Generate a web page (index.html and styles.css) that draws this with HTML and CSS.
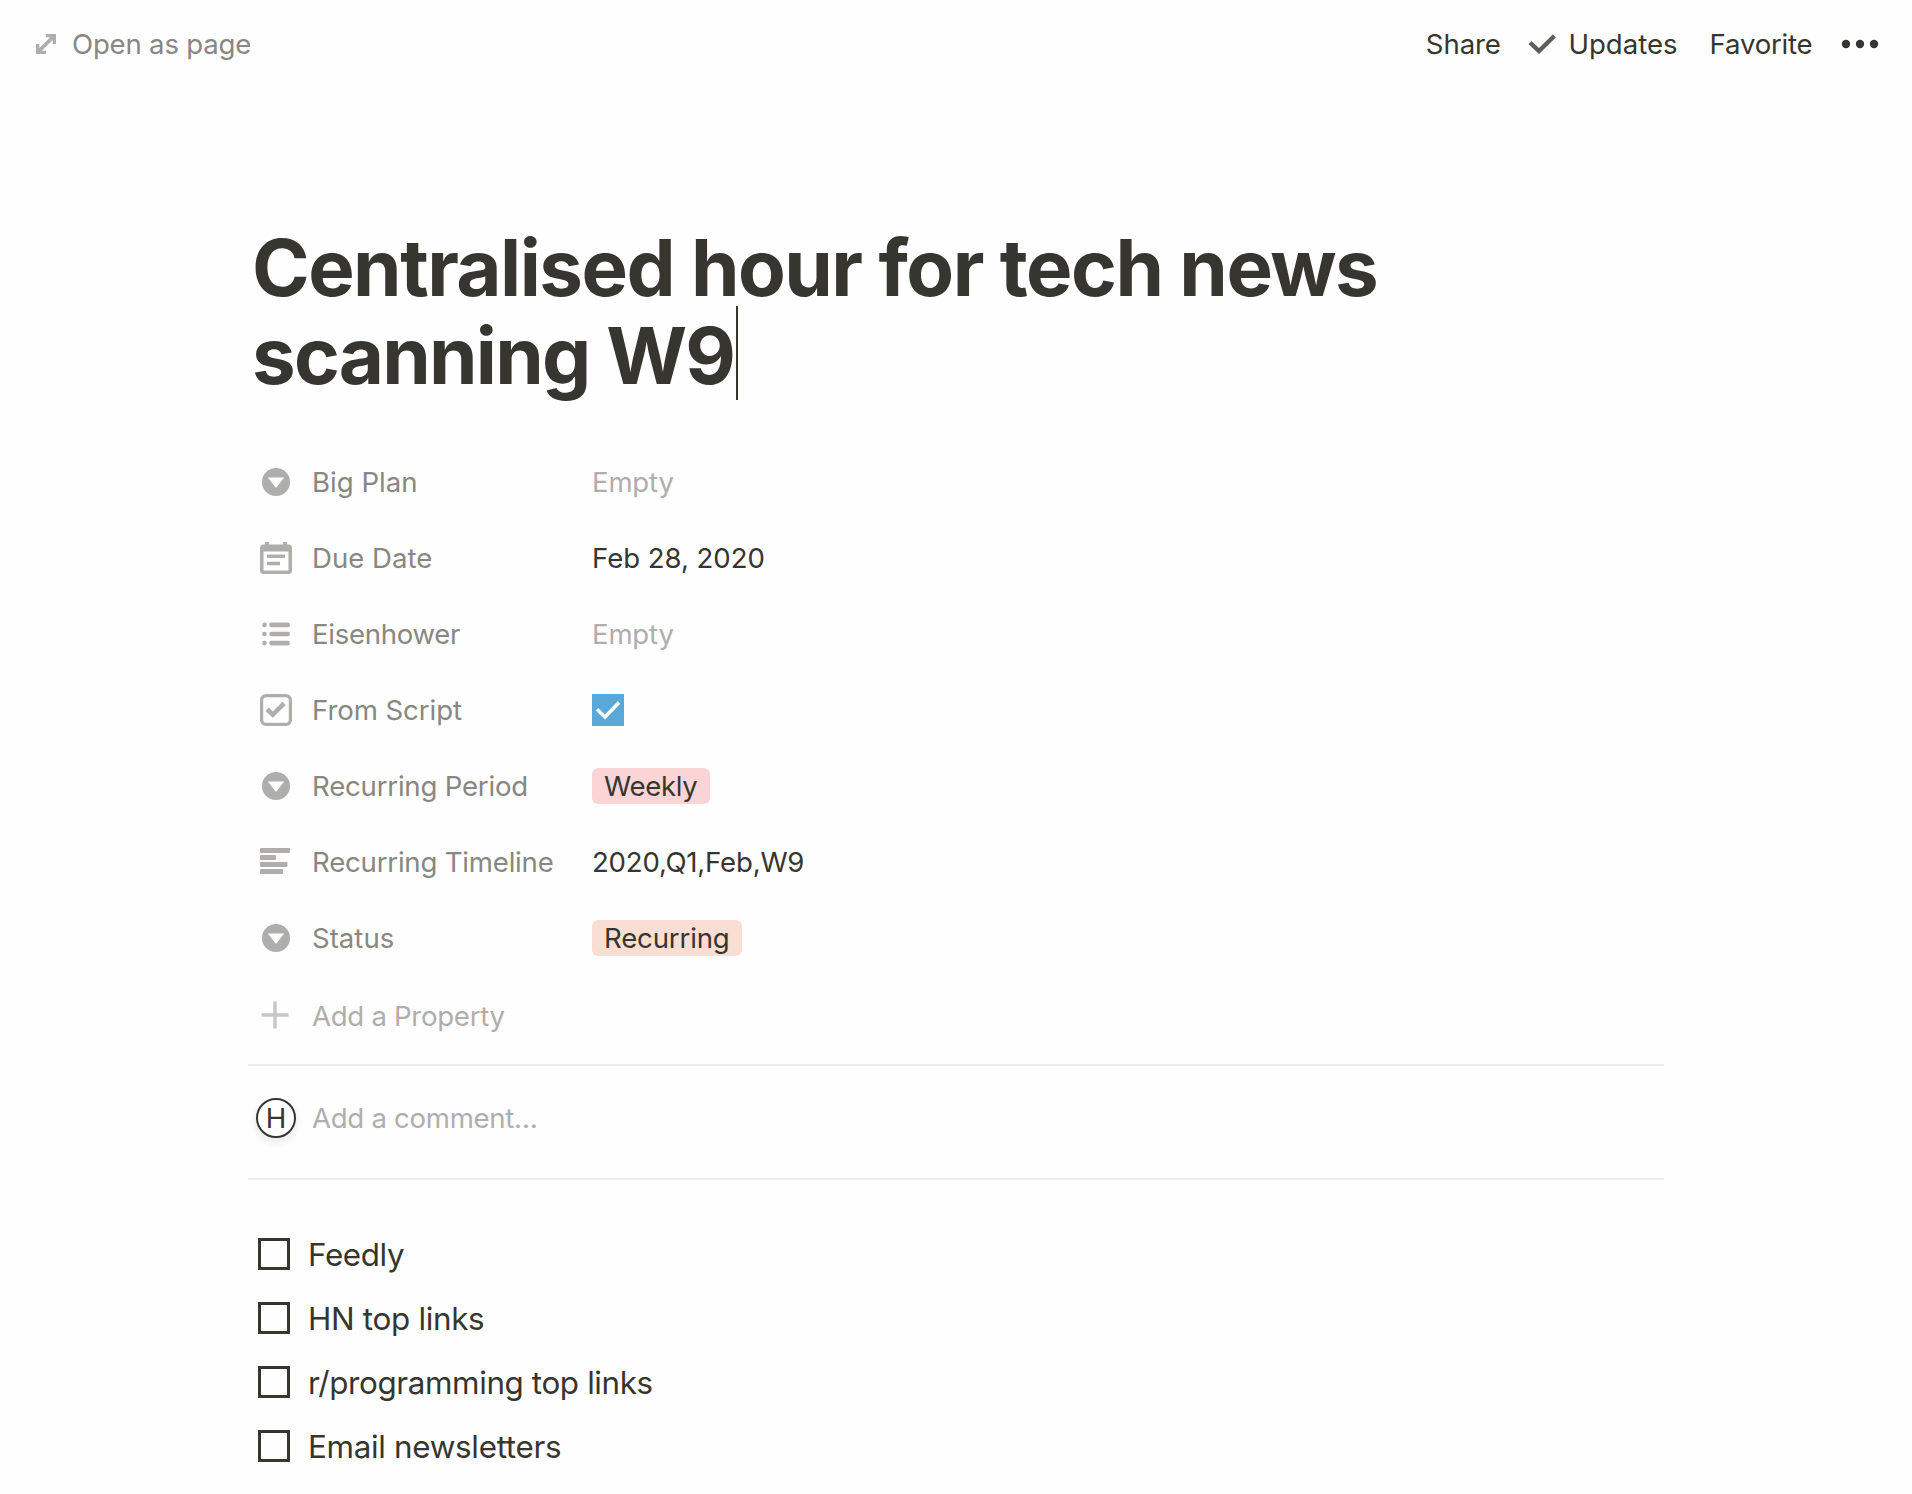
FILE: index.html
```html
<!DOCTYPE html>
<html lang="en">
<head>
<meta charset="utf-8">
<title>Centralised hour for tech news scanning W9</title>
<link rel="stylesheet" href="styles.css">
</head>
<body>
<svg class="sprite" aria-hidden="true">
  <symbol id="select" viewBox="0 0 32 32"><path fill-rule="evenodd" d="M16 2a14 14 0 1 1 0 28a14 14 0 0 1 0-28zM7.800 11.400L16 22l8.200-10.600z"/></symbol>
  <symbol id="date" viewBox="0 0 32 32"><path fill-rule="evenodd" d="M5 0h4v2.500h14V0h4v2.500h1.500A3.500 3.500 0 0 1 32 6v22.500a3.500 3.500 0 0 1-3.500 3.500h-25A3.500 3.500 0 0 1 0 28.500V6a3.500 3.500 0 0 1 3.500-3.500H5zM3.500 9.500v19h25v-19z"/><path d="M7 12.500h18V16H7zM7 19.700h13v3.500H7z"/></symbol>
  <symbol id="list" viewBox="0 0 32 32"><circle cx="4.500" cy="6.900" r="2.300"/><circle cx="4.500" cy="16" r="2.300"/><circle cx="4.500" cy="25.100" r="2.300"/><rect x="9.200" y="4.600" width="20.800" height="4.600" rx="2.300"/><rect x="9.200" y="13.700" width="20.800" height="4.600" rx="2.300"/><rect x="9.200" y="22.800" width="20.800" height="4.600" rx="2.300"/></symbol>
  <symbol id="checkbox" viewBox="0 0 32 32"><path fill-rule="evenodd" d="M6 0h20a6 6 0 0 1 6 6v20a6 6 0 0 1-6 6H6a6 6 0 0 1-6-6V6a6 6 0 0 1 6-6zM6.500 3.200a3 3 0 0 0-3.300 3.300v19a3 3 0 0 0 3.300 3.300h19a3 3 0 0 0 3.300-3.300v-19a3 3 0 0 0-3.300-3.300z"/><path d="M5.500 17l3.300-3.400 4 3.800 9.700-9.700 3.300 3.300-13 12.800z"/></symbol>
  <symbol id="text" viewBox="0 0 32 32"><rect y="2" width="30" height="5" rx="1"/><rect y="9" width="16" height="5" rx="1"/><rect y="16" width="27.500" height="5" rx="1"/><rect y="23" width="23" height="5" rx="1"/></symbol>
</svg>

<header class="topbar">
  <a class="open">
    <svg class="expand" viewBox="0 0 20 20"><path d="M10 0h10v10h-3.300V5.900L5.900 16.700H10V20H0V10h3.300v4.100L14.100 3.300H10z"/></svg>
    <span>Open as page</span>
  </a>
  <nav class="actions">
    <a class="share">Share</a>
    <a class="updates">
      <svg class="tick" viewBox="0 0 28 20"><path d="M2 8.700l9 8.300L26.300 2" /></svg>
      <span>Updates</span>
    </a>
    <a class="favorite">Favorite</a>
    <svg class="more" viewBox="0 0 38 10"><circle cx="5" cy="5" r="4.200"/><circle cx="19" cy="5" r="4.200"/><circle cx="33" cy="5" r="4.200"/></svg>
  </nav>
</header>

<main class="page">
  <h1 class="title">
    <span class="line">Centralised hour for tech news</span>
    <span class="line second">scanning W9<i class="caret"></i></span>
  </h1>

  <section class="props">
    <div class="row"><div class="name"><svg class="icon"><use href="#select"/></svg><span class="wide">Big Plan</span></div><div class="value empty">Empty</div></div>
    <div class="row"><div class="name"><svg class="icon"><use href="#date"/></svg><span class="wide">Due Date</span></div><div class="value date">Feb 28, 2020</div></div>
    <div class="row"><div class="name"><svg class="icon"><use href="#list"/></svg><span class="snug">Eisenhower</span></div><div class="value empty">Empty</div></div>
    <div class="row"><div class="name"><svg class="icon"><use href="#checkbox"/></svg><span class="script">From Script</span></div><div class="value"><svg class="checked" viewBox="0 0 32 32"><path d="M5 15.300l8 7.700L27 8.500"/></svg></div></div>
    <div class="row"><div class="name"><svg class="icon"><use href="#select"/></svg><span>Recurring Period</span></div><div class="value"><span class="tag red">Weekly</span></div></div>
    <div class="row"><div class="name"><svg class="icon"><use href="#text"/></svg><span>Recurring Timeline</span></div><div class="value">2020,Q1,Feb,W9</div></div>
    <div class="row"><div class="name"><svg class="icon"><use href="#select"/></svg><span class="wide">Status</span></div><div class="value"><span class="tag orange">Recurring</span></div></div>
    <div class="row add"><svg class="icon plus" viewBox="0 0 32 32"><path d="M15 1.500v27M1.500 15h27"/></svg><span class="snug">Add a Property</span></div>
  </section>

  <section class="comment">
    <div class="avatar">H</div>
    <span class="snug">Add a comment…</span>
  </section>

  <ul class="todos">
    <li><i class="box"></i><span>Feedly</span></li>
    <li><i class="box"></i><span class="loose">HN top links</span></li>
    <li><i class="box"></i><span>r/programming top links</span></li>
    <li><i class="box"></i><span class="loose">Email newsletters</span></li>
  </ul>
</main>
</body>
</html>
```
FILE: styles.css
```css
* { box-sizing: border-box; }

body {
  margin: 0;
  background: #fefefe;
  color: #37352f;
  font: 27.600px/36px Inter, "Liberation Sans", sans-serif;
  letter-spacing: -.210px;
  white-space: nowrap;
}

svg { display: block; flex: none; }
.sprite { position: absolute; width: 0; height: 0; }

.topbar {
  display: flex;
  justify-content: space-between;
  height: 88px;
  padding: 0 33px 0 36px;
  align-items: center;
}
.open { display: flex; align-items: center; gap: 16px; color: #888782; }
.expand { width: 20px; height: 20px; fill: #afaeac; }
.actions { display: flex; align-items: center; }
.share { margin-right: 27px; letter-spacing: -.100px; }
.updates { display: flex; align-items: center; gap: 12.500px; margin-right: 32px; letter-spacing: 0; }
.tick { width: 28px; height: 20px; fill: none; stroke: #5f5e5b; stroke-width: 4.400; }
.favorite { margin-right: 28.500px; }
.more { width: 38px; height: 10px; fill: #37352f; }

.page { width: 1416px; margin: 136px 0 0 248px; }

.title { margin: 0; padding-left: 4px; font-size: 78px; line-height: 88px; font-weight: 700; letter-spacing: -1.530px; }
.line { display: flex; }
.second { letter-spacing: -1.780px; }
.caret { width: 2px; height: 94px; margin: -6px 0 0 2px; background: #37352f; }

.props { padding: 44px 0 10px 12px; border-bottom: 2px solid #ededec; }
.row { display: flex; align-items: center; height: 76px; }
.name { display: flex; align-items: center; width: 332px; gap: 20px; color: #888782; }
.icon { width: 32px; height: 32px; fill: #afaeac; }
.wide { letter-spacing: 0; }
.script { letter-spacing: -.080px; }
.snug { letter-spacing: -.300px; }
.value.empty, .add, .comment { color: #afaeac; }
.date { letter-spacing: -.050px; }
.checked { width: 32px; height: 32px; background: #58a9d7; fill: none; stroke: #fff; stroke-width: 3.600; }
.tag { display: block; height: 36px; padding: 0 12px; border-radius: 6px; }
.red { background: #fbd5d5; width: 118px; letter-spacing: -.350px; }
.orange { background: #faded3; width: 150px; letter-spacing: -.170px; }
.add { margin-top: 2px; gap: 20px; }
.plus { fill: none; stroke: #c7c6c4; stroke-width: 3.400; }

.comment { display: flex; align-items: center; gap: 16px; height: 114px; padding: 0 0 8px 8px; border-bottom: 2px solid #ededec; }
.avatar { width: 40px; height: 40px; line-height: 37px; border: 2px solid #37352f; border-radius: 50%; background: #fff; color: #37352f; text-align: center; box-shadow: 0 4px 8px rgba(15, 15, 15, .1); }

.todos { list-style: none; margin: 42px 0 0; padding: 0 0 0 10px; font-size: 31.400px; }
.todos li { display: flex; align-items: center; gap: 18px; height: 64px; letter-spacing: -.390px; }
.todos span { padding-top: 2px; }
.todos .loose { letter-spacing: -.320px; }
.box { width: 32px; height: 32px; border: 3px solid #37352f; }
```
